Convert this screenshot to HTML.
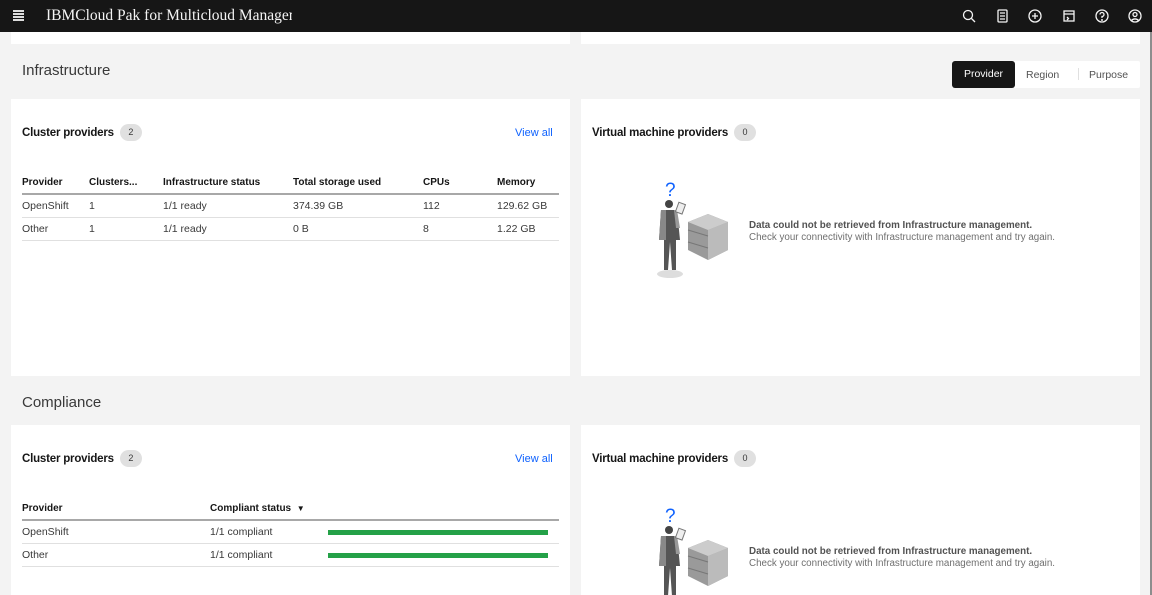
<!DOCTYPE html>
<html style="width:1152px;height:595px;overflow:hidden"><head><style>
*{margin:0;padding:0;box-sizing:border-box}
body{width:1152px;height:595px;overflow:hidden;background:#f3f3f3;font-family:"Liberation Sans",sans-serif;color:#161616;position:relative}
.a{position:absolute}
.hdr{left:0;top:0;width:1152px;height:32px;background:#161616}
.card{background:#fff;overflow:hidden}
.tt{display:flex;align-items:center;gap:6px}
.t{font-size:11.5px;font-weight:bold;color:#161616;letter-spacing:-0.2px}
.badge{background:#e0e0e0;border-radius:11px;width:22px;height:17px;font-size:9px;text-align:center;line-height:17px;color:#393939}
.txt{font-size:10.5px;color:#393939}
.th{font-size:10px;font-weight:bold;color:#161616}
.line{height:1px;background:#e0e0e0}
.bar{height:5px;background:#24a148}
.h2{font-size:15px;color:#393939}
</style></head><body>
<div class="a hdr"></div>
<div class="a" style="left:13px;top:10px;width:11px;height:2px;background:#ddd;box-shadow:0 3px 0 #ddd,0 6px 0 #ddd,0 9px 0 #ddd"></div>
<div class="a" style="left:46px;top:7px;font-family:'Liberation Serif',serif;font-size:15.5px;color:#f4f4f4;width:246px;overflow:hidden;white-space:nowrap">IBMCloud Pak for Multicloud Management</div>
<svg class="a" style="left:955px;top:6px" width="190" height="20" viewBox="0 0 190 20" fill="none" stroke="#f4f4f4" stroke-width="1.3">
<circle cx="13" cy="9" r="4.5"/><path d="M16.5 12.5L20 16"/>
<rect x="43" y="4" width="9" height="12" rx="1"/><path d="M45 7h5M45 10h5M45 13h5"/>
<circle cx="80" cy="10" r="6"/><path d="M80 7v6M77 10h6"/>
<rect x="109" y="5" width="10" height="10"/><path d="M109 8h10M112 11l1.5 1.5L112 14"/>
<circle cx="147" cy="10" r="6"/><path d="M145 8.5a2 2 0 1 1 2 2v1.5"/><circle cx="147" cy="14" r=".4"/>
<circle cx="180" cy="10" r="6"/><circle cx="180" cy="8.5" r="2"/><path d="M176.5 14.5a4 3 0 0 1 7 0"/>
</svg>
<div class="a card" style="left:11px;top:32px;width:559px;height:12px"></div>
<div class="a card" style="left:581px;top:32px;width:559px;height:12px"></div>

<div class="a h2" style="left:22px;top:62px">Infrastructure</div>
<div class="a card" style="left:952px;top:61px;width:188px;height:27px;border-radius:2px"></div>
<div class="a" style="left:952px;top:61px;width:63px;height:27px;background:#161616;border-radius:3px;color:#fff;font-size:10.5px;text-align:center;line-height:27px">Provider</div>
<div class="a" style="left:1026px;top:69px;font-size:10.5px;color:#525252">Region</div>
<div class="a" style="left:1078px;top:68px;width:1px;height:12px;background:#e0e0e0"></div>
<div class="a" style="left:1089px;top:69px;font-size:10.5px;color:#525252">Purpose</div>

<!-- infra cluster card -->
<div class="a card" style="left:11px;top:99px;width:559px;height:277px"></div>
<div class="a tt" style="left:22px;top:124px"><span class="t">Cluster providers</span><span class="badge">2</span></div>
<div class="a" style="left:515px;top:127px;font-size:11px;color:#0f62fe">View all</div>
<div class="a th" style="left:22px;top:177px">Provider</div>
<div class="a th" style="left:89px;top:177px">Clusters...</div>
<div class="a th" style="left:163px;top:177px">Infrastructure status</div>
<div class="a th" style="left:293px;top:177px">Total storage used</div>
<div class="a th" style="left:423px;top:177px">CPUs</div>
<div class="a th" style="left:497px;top:177px">Memory</div>
<div class="a" style="left:22px;top:193px;width:537px;height:2px;background:#a8a8a8"></div>
<div class="a txt" style="left:22px;top:200px">OpenShift</div><div class="a txt" style="left:89px;top:200px">1</div><div class="a txt" style="left:163px;top:200px">1/1 ready</div><div class="a txt" style="left:293px;top:200px">374.39 GB</div><div class="a txt" style="left:423px;top:200px">112</div><div class="a txt" style="left:497px;top:200px">129.62 GB</div>
<div class="a line" style="left:22px;top:217px;width:537px"></div>
<div class="a txt" style="left:22px;top:223px">Other</div><div class="a txt" style="left:89px;top:223px">1</div><div class="a txt" style="left:163px;top:223px">1/1 ready</div><div class="a txt" style="left:293px;top:223px">0 B</div><div class="a txt" style="left:423px;top:223px">8</div><div class="a txt" style="left:497px;top:223px">1.22 GB</div>
<div class="a line" style="left:22px;top:240px;width:537px"></div>

<!-- infra vm card -->
<div class="a card" style="left:581px;top:99px;width:559px;height:277px"></div>
<div class="a tt" style="left:592px;top:124px"><span class="t">Virtual machine providers</span><span class="badge">0</span></div>
<svg class="a" style="left:650px;top:178px" width="85" height="104" viewBox="0 0 85 104">
<text x="15" y="18" font-family="Liberation Sans" font-size="19" fill="#0f62fe">?</text>
<ellipse cx="20" cy="96" rx="13" ry="4" fill="#ddd"/>
<circle cx="19" cy="26" r="4" fill="#444"/>
<path d="M11 32h16l3 30h-4v30h-4l-2-28-2 28h-4V62H9z" fill="#555"/>
<path d="M11 32h5v30H9z" fill="#888"/><path d="M24 32h3l3 18h-4z" fill="#999"/>
<rect x="27" y="25" width="7" height="10" fill="#eee" stroke="#777" transform="rotate(20 30 30)"/>
<path d="M38 44l20-8 20 8v28l-20 10-20-10z" fill="#9a9a9a"/><path d="M58 52l20-8v28l-20 10z" fill="#bbb"/><path d="M38 44l20-8 20 8-20 8z" fill="#ccc"/>
<path d="M38 52l20 6M38 64l20 6" stroke="#777"/>
</svg>
<div class="a" style="left:749px;top:220px;font-size:9.8px;font-weight:bold;color:#525252">Data could not be retrieved from Infrastructure management.</div>
<div class="a" style="left:749px;top:232px;font-size:9.8px;color:#6f6f6f">Check your connectivity with Infrastructure management and try again.</div>

<div class="a h2" style="left:22px;top:394px">Compliance</div>

<!-- compliance cluster card -->
<div class="a card" style="left:11px;top:425px;width:559px;height:170px"></div>
<div class="a tt" style="left:22px;top:450px"><span class="t">Cluster providers</span><span class="badge">2</span></div>
<div class="a" style="left:515px;top:453px;font-size:11px;color:#0f62fe">View all</div>
<div class="a th" style="left:22px;top:503px">Provider</div>
<div class="a th" style="left:210px;top:503px">Compliant status &nbsp;<span style="font-size:8px">▼</span></div>
<div class="a" style="left:22px;top:519px;width:537px;height:2px;background:#a8a8a8"></div>
<div class="a txt" style="left:22px;top:526px">OpenShift</div><div class="a txt" style="left:210px;top:526px">1/1 compliant</div>
<div class="a bar" style="left:328px;top:530px;width:220px"></div>
<div class="a line" style="left:22px;top:543px;width:537px"></div>
<div class="a txt" style="left:22px;top:549px">Other</div><div class="a txt" style="left:210px;top:549px">1/1 compliant</div>
<div class="a bar" style="left:328px;top:553px;width:220px"></div>
<div class="a line" style="left:22px;top:566px;width:537px"></div>

<!-- compliance vm card -->
<div class="a card" style="left:581px;top:425px;width:559px;height:170px">
<svg style="position:absolute;left:69px;top:79px" width="85" height="104" viewBox="0 0 85 104">
<text x="15" y="18" font-family="Liberation Sans" font-size="19" fill="#0f62fe">?</text>
<circle cx="19" cy="26" r="4" fill="#444"/>
<path d="M11 32h16l3 30h-4v30h-4l-2-28-2 28h-4V62H9z" fill="#555"/>
<path d="M11 32h5v30H9z" fill="#888"/><path d="M24 32h3l3 18h-4z" fill="#999"/>
<rect x="27" y="25" width="7" height="10" fill="#eee" stroke="#777" transform="rotate(20 30 30)"/>
<path d="M38 44l20-8 20 8v28l-20 10-20-10z" fill="#9a9a9a"/><path d="M58 52l20-8v28l-20 10z" fill="#bbb"/><path d="M38 44l20-8 20 8-20 8z" fill="#ccc"/>
<path d="M38 52l20 6M38 64l20 6" stroke="#777"/>
</svg>
</div>
<div class="a tt" style="left:592px;top:450px"><span class="t">Virtual machine providers</span><span class="badge">0</span></div>
<div class="a" style="left:749px;top:546px;font-size:9.8px;font-weight:bold;color:#525252">Data could not be retrieved from Infrastructure management.</div>
<div class="a" style="left:749px;top:558px;font-size:9.8px;color:#6f6f6f">Check your connectivity with Infrastructure management and try again.</div>
<div class="a" style="left:1150px;top:32px;width:2px;height:563px;background:#8d8d8d"></div>
</body></html>
